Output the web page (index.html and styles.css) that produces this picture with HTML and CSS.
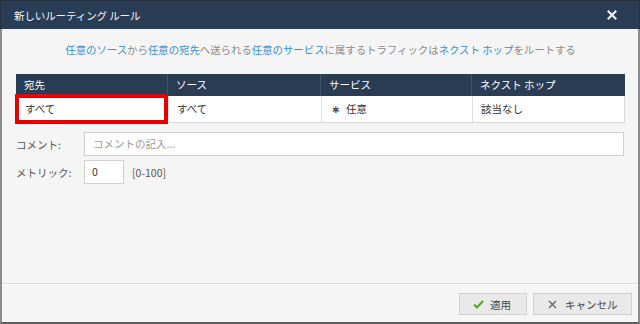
FILE: index.html
```html
<!DOCTYPE html>
<html lang="ja">
<head>
<meta charset="utf-8">
<link rel="stylesheet" href="styles.css">
</head>
<body>
<div class="dialog">
  <div class="titlebar">
    <span class="title">新しいルーティング ルール</span>
    <svg class="close" width="10" height="10" viewBox="0 0 10 10"><path d="M1.5 1.5 L8.5 8.5 M8.5 1.5 L1.5 8.5" stroke="#e8edf3" stroke-width="2.2" stroke-linecap="square"/></svg>
  </div>
  <div class="body">
    <div class="content">
      <p class="desc"><span class="lk">任意のソース</span>から<span class="lk">任意の宛先</span>へ送られる<span class="lk">任意のサービス</span>に属するトラフィックは<span class="lk">ネクスト ホップ</span>をルートする</p>
      <div class="table">
        <div class="row head">
          <div class="cell">宛先</div>
          <div class="cell">ソース</div>
          <div class="cell">サービス</div>
          <div class="cell">ネクスト ホップ</div>
        </div>
        <div class="row data">
          <div class="cell sel">すべて<span class="hl"></span></div>
          <div class="cell">すべて</div>
          <div class="cell"><span class="ast">✱</span>任意</div>
          <div class="cell">該当なし</div>
        </div>
      </div>
      <div class="field">
        <label class="lbl">コメント:</label>
        <div class="input wide ph">コメントの記入...</div>
      </div>
      <div class="field">
        <label class="lbl">メトリック:</label>
        <div class="input small">0</div>
        <span class="range">[0-100]</span>
      </div>
    </div>
    <div class="footer">
      <button class="btn apply"><svg width="11" height="9" viewBox="0 0 11 9"><path d="M1 4.5 L4 7.5 L10 1" fill="none" stroke="#5aa02c" stroke-width="2"/></svg>適用</button>
      <button class="btn cancel"><svg width="9" height="9" viewBox="0 0 9 9"><path d="M1 1 L8 8 M8 1 L1 8" stroke="#666" stroke-width="1.4"/></svg>キャンセル</button>
    </div>
  </div>
</div>
</body>
</html>
```
FILE: styles.css
```css
* { box-sizing: border-box; }
html, body { margin: 0; padding: 0; }
body {
  width: 640px;
  height: 324px;
  font-family: "Noto Sans CJK JP", "Noto Sans", sans-serif;
  font-size: 11px;
  color: #333;
  overflow: hidden;
}
.dialog {
  width: 640px;
  height: 324px;
  display: flex;
  flex-direction: column;
}
.titlebar {
  height: 29px;
  background: #2b3d55;
  border: 1px solid #22303f;
  border-bottom: none;
  display: flex;
  align-items: center;
  justify-content: space-between;
  padding: 0 22px 0 13px;
}
.title {
  color: #f2f4f7;
  font-size: 10.5px;
  letter-spacing: -0.1px;
}
.close { display: block; }
.body {
  flex: 1;
  background: #f5f5f5;
  border-left: 2px solid #8c8c8c;
  border-right: 2px solid #8c8c8c;
  border-bottom: 2px solid #5f5f5f;
  display: flex;
  flex-direction: column;
}
.content {
  flex: 1;
  padding: 12px 13px 0 14px;
}
.desc {
  margin: 0;
  text-align: center;
  color: #8a8a8a;
  font-size: 10.4px;
  line-height: 17px;
}
.lk { color: #3a8ed6; }
.table {
  margin-top: 16px;
  width: 609px;
}
.row {
  display: grid;
  grid-template-columns: 151px 153px 151px 154px;
}
.head {
  background: #2b3d55;
  height: 22px;
  color: #fff;
}
.head .cell {
  border-left: 1px solid #41536a;
  padding: 0 0 0 8px;
  line-height: 22px;
  font-size: 10.5px;
}
.head .cell:first-child { border-left: none; }
.data {
  background: #fff;
  height: 27px;
  border: 1px solid #d8d8d8;
  border-top: none;
}
.data .cell {
  border-left: 1px solid #e0e0e0;
  padding: 0 0 0 8px;
  line-height: 26px;
  font-size: 10.5px;
}
.data .cell:first-child { border-left: none; }
.sel { position: relative; }
.hl {
  position: absolute;
  left: -2px;
  top: -2px;
  right: 0;
  bottom: -1px;
  border: 4px solid #e60000;
}
.ast {
  color: #555;
  font-size: 9px;
  margin: 0 6px 0 2px;
}
.field {
  display: flex;
  align-items: center;
  margin-top: 9px;
}
.field + .field { margin-top: 4px; }
.lbl {
  width: 68px;
  color: #555;
  font-size: 10.5px;
}
.input {
  height: 24px;
  background: #fff;
  border: 1px solid #d0d0d0;
  line-height: 22px;
  padding-left: 7px;
  font-size: 10.5px;
  color: #333;
}
.wide { width: 540px; }
.ph { color: #999; padding-left: 8px; }
.small { width: 40px; }
.range {
  margin-left: 8px;
  color: #555;
  font-size: 10.5px;
}
.footer {
  height: 39px;
  border-top: 1px solid #d9d9d9;
  box-shadow: inset 0 1px 0 #ffffff;
  display: flex;
  justify-content: flex-end;
  align-items: flex-start;
  padding: 9px 6px 0 0;
  gap: 6px;
}
.btn {
  height: 22px;
  background: #e9e9e9;
  border: 1px solid #d2d2d2;
  font-family: "Noto Sans CJK JP", "Noto Sans", sans-serif;
  font-size: 10.5px;
  color: #444;
  display: flex;
  align-items: center;
  gap: 6px;
  padding: 0 0 0 13px;
}
.apply { width: 68px; }
.cancel { width: 99px; padding-left: 14px; gap: 8px; }
```
